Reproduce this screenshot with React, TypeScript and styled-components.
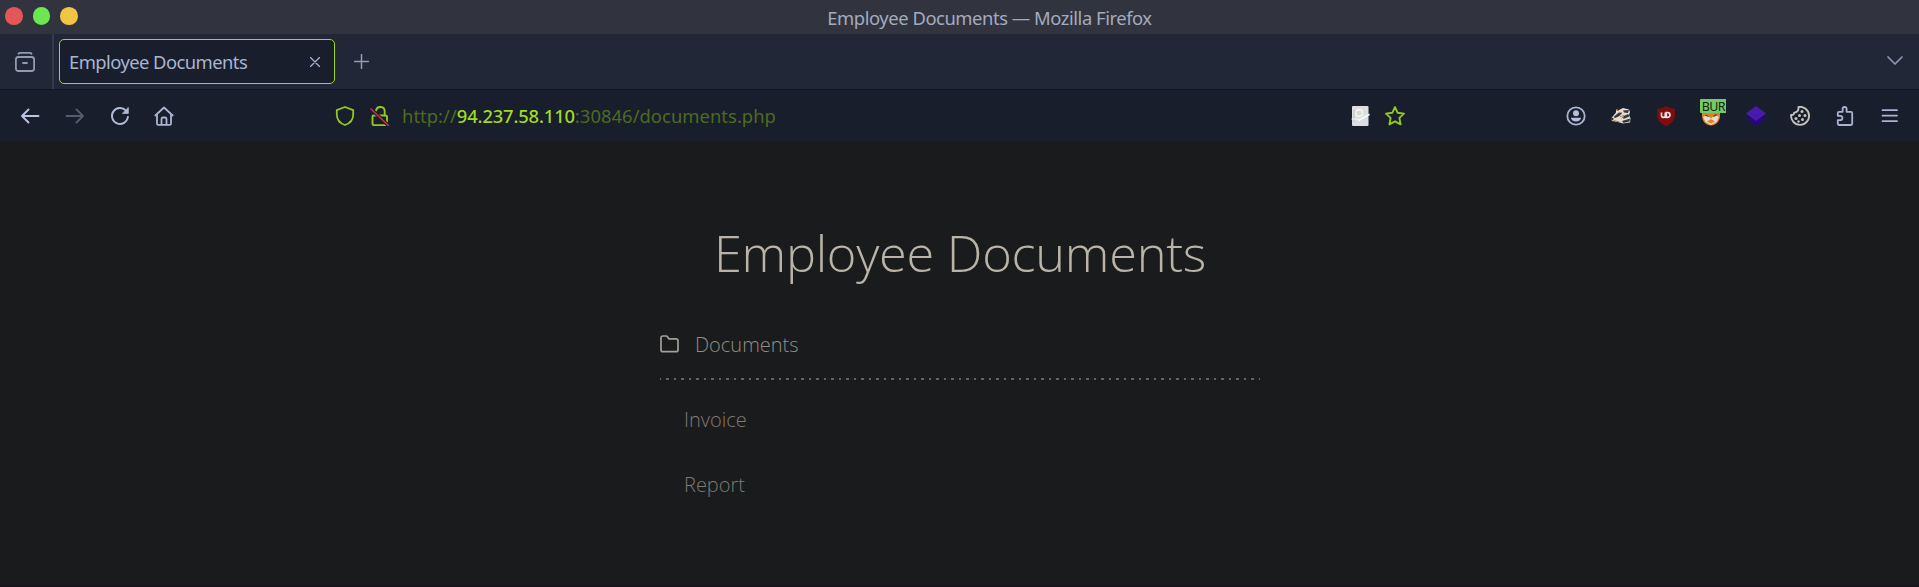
import React from "react";
import styled, { createGlobalStyle } from "styled-components";

const Global = createGlobalStyle`
  *, *::before, *::after { box-sizing: border-box; }
  html, body { margin: 0; padding: 0; background: #1a1b1d; }
  body { overflow: hidden; }
  svg { display: block; flex: none; }
`;

const Window = styled.div`
  display: flex;
  flex-direction: column;
  width: 1919px;
  height: 587px;
  background: #1a1b1d;
  font-family: "Noto Sans", "Open Sans", sans-serif;
`;

const TitleBar = styled.header`
  display: grid;
  grid-template-columns: 160px 1fr 100px;
  height: 34px;
  flex: none;
  background: #31343f;
`;

const Lights = styled.div`
  display: flex;
  gap: 10px;
  padding: 7px 0 0 5px;
`;

const Light = styled.span<{ $color: string }>`
  width: 17.5px;
  height: 17.5px;
  border-radius: 50%;
  background: ${(p) => p.$color};
`;

const WindowTitle = styled.div`
  font-size: 18.4px;
  line-height: 35px;
  letter-spacing: -0.45px;
  text-align: center;
  color: #a3abbe;
`;

const TabBar = styled.div`
  display: flex;
  align-items: center;
  height: 55px;
  flex: none;
  background: #212736;
`;

const ViewButton = styled.div`
  display: flex;
  align-items: center;
  width: 54px;
  height: 55px;
  padding-left: 15px;
  border-right: 2px solid #343b4b;
`;

const Tab = styled.div`
  display: flex;
  align-items: center;
  justify-content: space-between;
  width: 276px;
  height: 45px;
  margin: 0 19px 0 5px;
  padding: 0 14px 0 9px;
  border: 1.5px solid #9fd81c;
  border-radius: 5px;
  background: #181e2b;
`;

const TabLabel = styled.span`
  font-size: 18.4px;
  line-height: 24px;
  letter-spacing: -0.56px;
  color: #a9b4d0;
`;

const TabListButton = styled.div`
  margin: -2px 16px 0 auto;
`;

const NavBar = styled.nav`
  display: flex;
  align-items: center;
  height: 52px;
  flex: none;
  padding: 0 19px 0 20px;
  border-top: 1px solid #111521;
  background: #181e2b;
`;

const NavButtons = styled.div`
  display: flex;
  align-items: center;
  gap: 24.8px;
  width: 315px;
`;

const AddressBar = styled.div`
  display: flex;
  align-items: center;
  width: 1070px;
`;

const Url = styled.span`
  margin: 0 auto 0 12px;
  font-size: 18.4px;
  line-height: 24px;
  letter-spacing: 0.04px;
  color: #4c6b20;
`;

const Host = styled.span`
  font-weight: 500;
  letter-spacing: -0.17px;
  color: #9fdc1e;
`;

const Gap = styled.span<{ $w: number }>`
  width: ${(p) => p.$w}px;
`;

const Extensions = styled.div`
  display: flex;
  align-items: center;
  gap: 24.8px;
  margin-left: auto;
`;

const BadgedIcon = styled.div`
  position: relative;
  width: 20px;
  height: 20px;
`;

const Badge = styled.span`
  position: absolute;
  top: -7px;
  left: -1px;
  width: 26px;
  height: 14px;
  padding-left: 2px;
  border-radius: 1px 0 0 1px;
  background: #72cb66;
  color: #14240f;
  font-size: 12.5px;
  line-height: 15px;
  letter-spacing: -0.7px;
  white-space: nowrap;
`;

const Page = styled.main`
  display: flex;
  flex-direction: column;
  align-items: center;
  flex: 1;
  padding: 77px 0 0 1px;
  border-bottom: 2px solid #1a121d;
  font-family: "Open Sans", sans-serif;
  font-weight: 300;
`;

const Heading = styled.h1`
  margin: 0;
  font-size: 50.5px;
  line-height: 70px;
  font-weight: 300;
  letter-spacing: -0.27px;
  color: #b9b3a8;
`;

const List = styled.section`
  width: 600px;
  margin-top: 41px;
`;

const ListHeader = styled.div`
  display: flex;
  align-items: center;
  gap: 16px;
  height: 30px;
  color: #938d83;
  font-size: 20px;
`;

const Dots = styled.div`
  height: 2px;
  margin-top: 19px;
  background: repeating-linear-gradient(90deg, #66645a 0 1.2px, transparent 1.2px 6.3px, #66645a 6.3px 7.5px);
`;

const Item = styled.a`
  display: block;
  margin-left: 24px;
  padding: 25px 0 10px;
  height: 65px;
  font-size: 20px;
  line-height: 30px;
  color: #7f796f;
`;

const FG = "#a9b4d0";
const LIME = "#93c91f";

const s = (stroke: string, strokeWidth = 1.8) =>
  ({ fill: "none", stroke, strokeWidth, strokeLinecap: "round", strokeLinejoin: "round" }) as const;

export default function App() {
  return (
    <Window>
      <Global />
      <TitleBar>
        <Lights>
          <Light $color="#e35757" />
          <Light $color="#6be851" />
          <Light $color="#f1c543" />
        </Lights>
        <WindowTitle>Employee Documents — Mozilla Firefox</WindowTitle>
      </TitleBar>

      <TabBar>
        <ViewButton>
          <svg width="20" height="20" viewBox="0 0 20 20" {...s("#8f9bb0", 1.8)}>
            <path d="M3.500 1.800Q4 .9 5 .9H15q1 0 1.500.9" />
            <rect x=".9" y="5" width="18.200" height="14" rx="2.500" />
            <path d="M8 11h4" />
          </svg>
        </ViewButton>
        <Tab>
          <TabLabel>Employee Documents</TabLabel>
          <svg width="10" height="10" viewBox="0 0 10 10" {...s(FG, 1.3)}>
            <path d="M.5.5l9 9M9.500.5l-9 9" />
          </svg>
        </Tab>
        <svg width="15" height="15" viewBox="0 0 15 15" {...s("#929db4", 1.5)}>
          <path d="M7.500.5v14M.5 7.500h14" />
        </svg>
        <TabListButton>
          <svg width="16" height="9" viewBox="0 0 16 9" {...s("#8e98ae", 1.7)}>
            <path d="M1 1l7 7 7-7" />
          </svg>
        </TabListButton>
      </TabBar>

      <NavBar>
        <NavButtons>
          <svg width="20" height="20" viewBox="0 0 20 20" {...s("#b9c4e0", 1.9)}>
            <path d="M8.500 3.500L2 10l6.500 6.500M2 10h16.500" />
          </svg>
          <svg width="20" height="20" viewBox="0 0 20 20" {...s("#545c6e")}>
            <path d="M11.500 3.500L18 10l-6.500 6.500M18 10H1.500" />
          </svg>
          <svg width="20" height="20" viewBox="0 0 20 20" {...s("#b0bbd7", 1.9)}>
            <path d="M16 4.700A8 8 0 1 0 17.900 11" />
            <path d="M18.300 1.800v5.600h-5.600z" fill="#b0bbd7" strokeWidth=".8" />
          </svg>
          <svg width="20" height="20" viewBox="0 0 20 20" {...s("#a9b4d0")}>
            <path d="M1.300 9.500L10 1.500l8.700 8M3 8.500v9.200q0 1.200 1.200 1.200h11.600q1.200 0 1.200-1.200V8.500" />
            <path d="M7.500 18.500V13q0-1.500 1.500-1.500h2q1.500 0 1.500 1.500v5.500" />
          </svg>
        </NavButtons>
        <AddressBar>
          <svg width="20" height="20" viewBox="0 0 20 20" {...s(LIME)}>
            <path d="M10 1l8.200 3.200v4.300c0 4.800-3.200 8.800-8.200 10.500-5-1.700-8.200-5.700-8.200-10.500V4.200z" />
          </svg>
          <Gap $w={15} />
          <svg width="20" height="20" viewBox="0 0 20 20" {...s(LIME, 1.9)}>
            <path d="M3.500 9.500h12.200q1.300 0 1.300 1.300v7q0 1.300-1.300 1.300H3.800q-1.300 0-1.300-1.300v-7q0-1.300 1-1.300" />
            <path d="M6 4.500a4.400 4.400 0 0 1 8.700 1v4" />
            <path d="M1 3l17.500 16.500" stroke="#181e2b" strokeWidth="3.600" strokeLinecap="butt" />
            <path d="M1 3l17.500 16.500" stroke="#c92a4c" strokeWidth="1.700" />
          </svg>
          <Url>
            http://<Host>94.237.58.110</Host>:30846/documents.php
          </Url>
          <svg width="20" height="20" viewBox="0 0 20 20">
            <rect x="2" y="0" width="16.500" height="20" rx="1" fill="#dddedf" />
            <path d="M4 16.500V4.500h3" stroke="#c2c4c6" fill="none" />
            <circle cx="9" cy="7" r="3.300" fill="#d8d8d8" stroke="#f7f7f7" strokeWidth="1.400" />
            <path d="M8.500 14.500L19.500 8.300" stroke="#fafafa" strokeWidth="1.800" />
            <path d="M1.500 13h7" stroke="#f7f7f7" />
          </svg>
          <Gap $w={15} />
          <svg width="20" height="20" viewBox="0 0 20 20" {...s(LIME, 1.9)}>
            <path d="M10 1.100l2.700 5.700 6.300.8-4.600 4.300 1.200 6.500L10 15.300l-5.600 3.100 1.200-6.500L1 7.600l6.300-.8z" />
          </svg>
        </AddressBar>
        <Extensions>
          <svg width="20" height="20" viewBox="0 0 20 20">
            <circle cx="10" cy="10" r="8.700" {...s("#a9b4d0")} />
            <circle cx="10" cy="7.200" r="3" fill="#b4bfda" />
            <path d="M4.800 11.800h10.400a5.300 4.500 0 0 1-10.400 0z" fill="#b4bfda" />
          </svg>
          <svg width="20" height="20" viewBox="0 0 20 20">
            <path d="M0 12.500L5 6.500V3.500l3 .5L12 2l6 1.500 1 2.500-1 3 1.500 3-.5 4.500-7 1-5-1.500-6-1z" fill="#e4ddd5" />
            <path d="M3 10.500l5-4 3.500.2-3.500 3.500-4.500 2zM12 4.500l6-.5-1 3-4-.5zM12 10.500l5-2.500 1.500 2.500-6 2.500zM11 15l8-2.500-.5 3-6 1.500z" fill="#39373a" />
            <path d="M5.500 4.500l2.500 0M9 10.500l4.500-1-3 3M2.500 14.500l6 1.500" stroke="#b77b43" fill="none" />
            <circle cx="1.300" cy="13" r="1.200" fill="#2d2526" />
          </svg>
          <svg width="20" height="20" viewBox="0 0 20 20">
            <path d="M10 0c2 1.500 5 2.500 9 2.700V9c0 5.500-4 9-9 11-5-2-9-5.500-9-11V2.700C5 2.500 8 1.500 10 0z" fill="#7c0d10" />
            <path d="M5.500 6.500v3a1.900 1.900 0 0 0 3.800 0v-3M10.300 6.500v4.800h1.300a2.400 2.400 0 0 0 0-4.800z" fill="none" stroke="#f2dede" strokeWidth="1.700" />
          </svg>
          <BadgedIcon>
            <svg width="20" height="20" viewBox="0 0 20 20">
              <path d="M1 4l9 1 9-1v6c0 5-4 9.500-9 9.500S1 15 1 10z" fill="#dd8326" />
              <path d="M2 11l4-2 4 3.500L14 9l4 2-2.500 5-5.500 3-5.500-3z" fill="#eadfce" />
              <path d="M4.500 9l3 1.500M15.500 8.500l-3 2" stroke="#4b2b18" strokeWidth="1.300" fill="none" />
              <path d="M6 15.500l4-2.500 4 2.500-4 2z" fill="#dd8326" />
            </svg>
            <Badge>BUR</Badge>
          </BadgedIcon>
          <svg width="20" height="20" viewBox="0 0 20 20">
            <path d="M0 12.500L10 6l10 6.500L10 20z" fill="#25087a" />
            <path d="M0 7.500L10 0l10 7.500L10 15z" fill="#481bad" />
          </svg>
          <svg width="20" height="20" viewBox="0 0 20 20">
            <path d="M8.500 1a9 9 0 1 1-7.400 8c1.900.2 3.200-.7 3.100-2.400C7 6.700 8.800 4.500 8.500 1z" {...s("#c5c3c0", 1.9)} />
            <g fill="#c5c3c0">
              <circle cx="12" cy="5.500" r="1.500" />
              <circle cx="9.500" cy="9.500" r="1.500" />
              <circle cx="15" cy="9.500" r="1.500" />
              <circle cx="6" cy="12.500" r="1.500" />
              <circle cx="12.500" cy="13.500" r="1.500" />
              <circle cx="8.500" cy="15.500" r="1.200" />
            </g>
          </svg>
          <svg width="20" height="20" viewBox="0 0 20 20" {...s("#a9b4d0")}>
            <path d="M2.800 7.500V7q0-1.200 1.200-1.200h3.600V3a2 2 0 0 1 4 0v2.800H16q1.200 0 1.200 1.200v10.800q0 1.200-1.200 1.200H4q-1.200 0-1.200-1.200v-3.600h2.400a2.200 2.200 0 0 0 0-4.400H2.800z" />
          </svg>
          <svg width="20" height="20" viewBox="0 0 20 20" {...s("#a9b4d0", 1.700)}>
            <path d="M2.500 4.200h14.500M2.500 9.700h14.500M2.500 15.200h14.500" />
          </svg>
        </Extensions>
      </NavBar>

      <Page>
        <Heading>Employee Documents</Heading>
        <List>
          <ListHeader>
            <svg width="19" height="18" viewBox="0 0 19 18" {...s("#a5a096", 1.700)}>
              <path d="M1 15V3Q1 1 3 1h3.200q.8 0 1.300.8L8.800 3.800h7.200q2 0 2 2V15q0 1.700-2 1.700H3Q1 16.700 1 15z" />
            </svg>
            Documents
          </ListHeader>
          <Dots />
          <Item>Invoice</Item>
          <Item>Report</Item>
        </List>
      </Page>
    </Window>
  );
}
